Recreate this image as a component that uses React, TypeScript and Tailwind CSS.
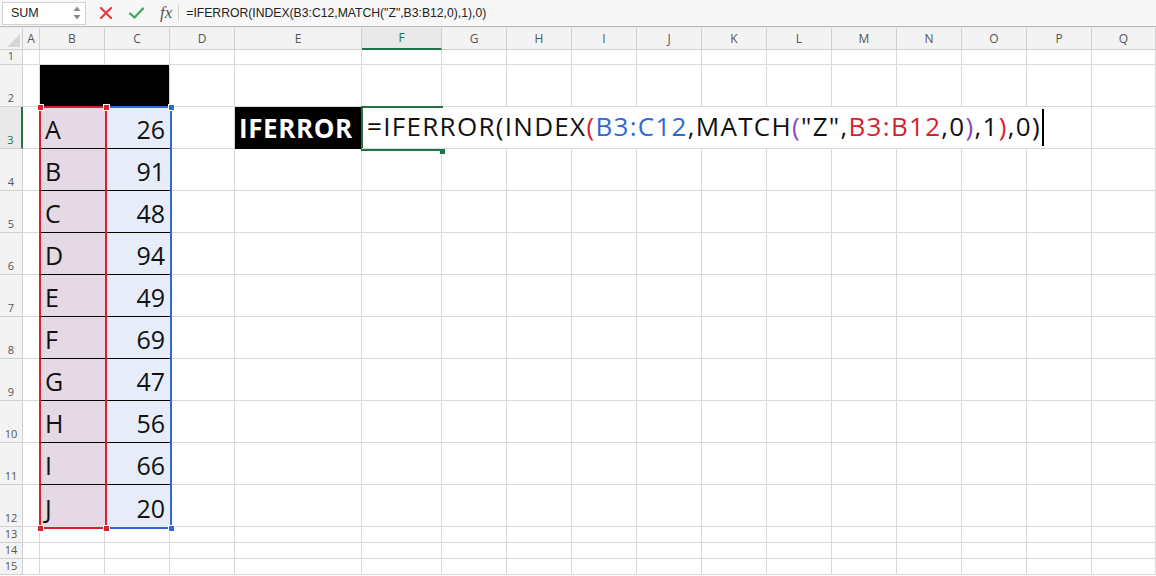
import React from "react";

const COLS = ["A","B","C","D","E","F","G","H","I","J","K","L","M","N","O","P","Q"];
const COLW = [
  "w-[17px]","w-[65px]","w-[65px]","w-[65px]","w-[127px]","w-[80px]",
  "w-[65px]","w-[65px]","w-[65px]","w-[65px]","w-[65px]","w-[65px]","w-[65px]","w-[65px]","w-[65px]","w-[65px]",
  "w-[64px]",
];
const ROWH: Record<number, string> = {
  1: "h-[15px]", 2: "h-[42px]", 3: "h-[42px]", 4: "h-[42px]", 5: "h-[42px]", 6: "h-[42px]",
  7: "h-[42px]", 8: "h-[42px]", 9: "h-[42px]", 10: "h-[42px]", 11: "h-[42px]", 12: "h-[42px]",
  13: "h-[16px]", 14: "h-[16px]", 15: "h-[16px]",
};
const DATA: [string, string][] = [
  ["A","26"],["B","91"],["C","48"],["D","94"],["E","49"],["F","69"],["G","47"],["H","56"],["I","66"],["J","20"],
];

const cellFont = { fontFamily: "'Open Sans', 'Noto Sans', sans-serif" };

function Cell({ r, c }: { r: number; c: number }) {
  const w = COLW[c];
  const h = ROWH[r];
  const col = COLS[c];
  if (r === 2 && (col === "B" || col === "C")) {
    return <div className={`${w} ${h} shrink-0 bg-black ${col === "C" ? "border-r border-[#d9d9d9]" : ""}`} />;
  }
  if (r >= 3 && r <= 12 && col === "B") {
    const last = r === 12;
    return (
      <div className={`${w} ${h} shrink-0 bg-[#e5d9e5] flex items-end pl-[5px] pb-[2px] text-[25px] leading-none text-[#111] ${last ? "" : "border-b border-black"}`} style={cellFont}>
        <span className="pb-[4px]">{DATA[r - 3][0]}</span>
      </div>
    );
  }
  if (r >= 3 && r <= 12 && col === "C") {
    const last = r === 12;
    return (
      <div className={`${w} ${h} shrink-0 bg-[#e6edf8] flex items-end justify-end pr-[5px] pb-[2px] text-[25px] leading-none text-[#111] ${last ? "" : "border-b border-black"}`} style={cellFont}>
        <span className="pb-[4px]">{DATA[r - 3][1]}</span>
      </div>
    );
  }
  if (r === 3 && col === "E") {
    return (
      <div className={`${w} ${h} shrink-0 bg-black flex items-center pl-[4px] text-[26px] tracking-[0.6px] font-bold text-white leading-none`} style={cellFont}>
        IFERROR
      </div>
    );
  }
  if (r === 3 && col === "F") {
    return (
      <div className={`${w} ${h} shrink-0 border-b border-[#d9d9d9] relative z-10 flex items-center pl-[5px] text-[26px] tracking-[1.3px] leading-none text-[#111] whitespace-nowrap overflow-visible`} style={cellFont}>
        <span className="pb-[3px]">
          =IFERROR(INDEX<span className="text-[#d8212f]">(</span>
          <span className="text-[#2f69d2]">B3:C12</span>,MATCH<span className="text-[#8a47c2]">(</span>"Z",
          <span className="text-[#d8212f]">B3:B12</span>,0<span className="text-[#8a47c2]">)</span>,1
          <span className="text-[#d8212f]">)</span>,0)
        </span>
        <span className="block shrink-0 w-[2px] h-[37px] bg-black ml-[1px]" />
      </div>
    );
  }
  const noRight = r === 3 && c >= 5 && c <= 14;
  return <div className={`${w} ${h} shrink-0 border-b border-[#d9d9d9] ${noRight ? "" : "border-r"}`} />;
}

function Handle({ cls }: { cls: string }) {
  return <div className={`absolute w-[7px] h-[7px] border border-white ${cls}`} />;
}

export default function App() {
  return (
    <div className="w-[1156px] h-[576px] overflow-hidden bg-white select-none" style={{ fontFamily: "'Open Sans', 'Noto Sans', sans-serif" }}>
      {/* Formula bar */}
      <div className="h-[26px] bg-[#f7f7f7] flex items-center relative">
        <div className="ml-[2px] w-[84px] h-[23px] bg-white border border-[#d2d2d2] flex items-center justify-between pl-[8px] pr-[4px]">
          <span className="text-[12.5px] text-[#222]" style={{ fontFamily: "'Liberation Sans', Arial, sans-serif" }}>SUM</span>
          <svg width="8" height="16" viewBox="0 0 8 16">
            <path d="M0.5 6 L4 1.5 L7.5 6 Z" fill="#8a8a8a" />
            <path d="M0.5 10 L4 14.5 L7.5 10 Z" fill="#8a8a8a" />
          </svg>
        </div>
        <svg className="ml-[14px]" width="12" height="12" viewBox="0 0 12 12">
          <path d="M1 1 L11 11 M11 1 L1 11" stroke="#e23a3f" strokeWidth="2.2" strokeLinecap="round" />
        </svg>
        <svg className="ml-[17px]" width="15" height="12" viewBox="0 0 15 12">
          <path d="M1 6.5 L5.5 10.5 L14 1.5" stroke="#3aa757" strokeWidth="2.2" fill="none" strokeLinecap="round" strokeLinejoin="round" />
        </svg>
        <span className="ml-[16px] text-[17px] italic text-[#555] leading-none pb-[2px]" style={{ fontFamily: "'Liberation Serif', 'Times New Roman', serif" }}>fx</span>
        <div className="ml-[6px] w-px h-[16px] bg-[#d0d0d0]" />
        <span className="ml-[7px] text-[12.2px] text-[#222]" style={{ fontFamily: "'Liberation Sans', Arial, sans-serif" }}>
          =IFERROR(INDEX(B3:C12,MATCH("Z",B3:B12,0),1),0)
        </span>
      </div>
      <div className="h-[2px] border-t border-[#b8b8b8] bg-[#ececec]" />

      {/* Sheet */}
      <div className="relative">
        <div className="flex h-[22px]">
          <div className="w-[23px] shrink-0 h-full bg-[#f3f3f3] border-r border-b border-[#d0d0d0] relative">
            <svg className="absolute right-[2px] bottom-[2px]" width="13" height="13" viewBox="0 0 13 13">
              <path d="M13 0 L13 13 L0 13 Z" fill="#d6d6d6" />
            </svg>
          </div>
          {COLS.map((c, i) => (
            <div
              key={c}
              className={`${COLW[i]} shrink-0 h-full flex items-center justify-center text-[12px] ${
                c === "F"
                  ? "bg-[#e9e9e9] text-[#217346] border-b-2 border-b-[#217346] border-r border-r-[#d0d0d0]"
                  : "bg-[#f3f3f3] text-[#555] border-r border-b border-[#d0d0d0]"
              }`}
            >
              {c}
            </div>
          ))}
        </div>
        {Array.from({ length: 15 }, (_, k) => k + 1).map((r) => (
          <div key={r} className="flex">
            <div
              className={`w-[23px] shrink-0 ${ROWH[r]} flex items-end justify-center pb-[1px] text-[11px] leading-[14px] ${
                r === 3
                  ? "bg-[#e9e9e9] text-[#217346] border-r-2 border-r-[#217346] border-b border-b-[#d0d0d0]"
                  : "bg-[#f3f3f3] text-[#555] border-r border-b border-[#d0d0d0]"
              }`}
            >
              {r}
            </div>
            {COLS.map((_, c) => (
              <Cell key={c} r={r} c={c} />
            ))}
          </div>
        ))}

        <div className="absolute left-[105px] top-[78px] w-[67px] h-[423px] border-2 border-[#2f69d2] pointer-events-none" />
        <div className="absolute left-[39px] top-[78px] w-[68px] h-[423px] border-2 border-[#d8212f] pointer-events-none" />
        <Handle cls="bg-[#2f69d2] left-[168px] top-[76px]" />
        <Handle cls="bg-[#2f69d2] left-[168px] top-[497px]" />
        <Handle cls="bg-[#d8212f] left-[37px] top-[76px]" />
        <Handle cls="bg-[#d8212f] left-[103px] top-[76px]" />
        <Handle cls="bg-[#d8212f] left-[37px] top-[497px]" />
        <Handle cls="bg-[#d8212f] left-[103px] top-[497px]" />

        <div className="absolute left-[361px] top-[78px] w-[82px] h-[45px] border-2 border-r-0 border-[#217346] pointer-events-none" />
        <div className="absolute left-[440px] top-[121px] w-[5px] h-[5px] bg-[#217346]" />
      </div>
    </div>
  );
}
